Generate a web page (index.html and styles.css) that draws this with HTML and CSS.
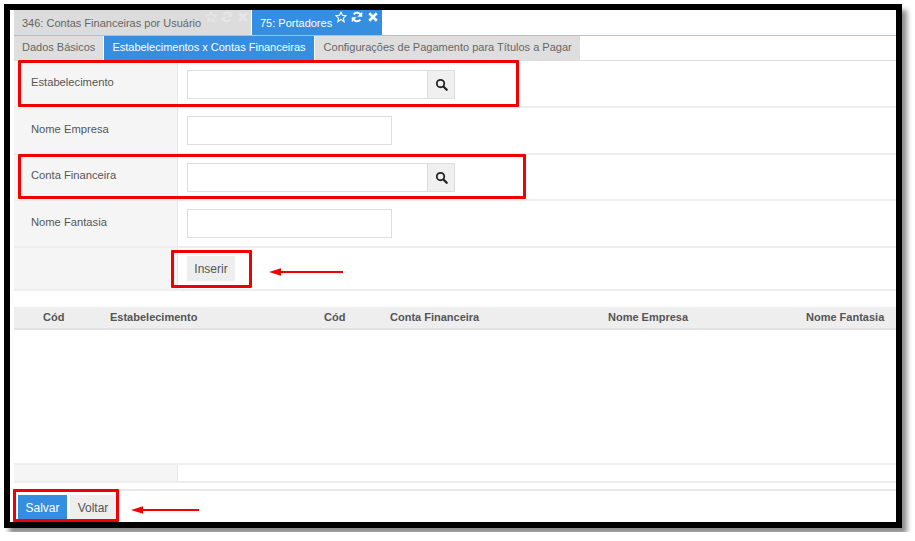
FILE: index.html
```html
<!DOCTYPE html>
<html lang="pt">
<head>
<meta charset="utf-8">
<title>Portadores</title>
<link rel="stylesheet" href="styles.css">
</head>
<body>
<div class="frame">
  <div class="page">
    <div class="window-tabs">
      <div class="wtab">
        <span class="wtab-title">346: Contas Financeiras por Usuário</span>
        <span class="wtab-icons">
          <svg class="ico" viewBox="0 0 16 16"><path d="M8 1.6l2 4.2 4.6.6-3.4 3.2.9 4.6L8 11.4l-4.1 2.8.9-4.6L1.4 6.4 6 5.8z" fill="none" stroke="currentColor" stroke-width="1.5"/></svg>
          <svg class="ico" viewBox="0 0 16 16"><path d="M13.4 6.4A5.6 5.6 0 0 0 3.6 4.4M2.6 9.6a5.6 5.6 0 0 0 9.8 2" fill="none" stroke="currentColor" stroke-width="2.6"/><path d="M15 1v6.6H8.4zM1 15V8.4h6.6z" fill="currentColor"/></svg>
          <svg class="ico" viewBox="0 0 16 16"><path d="M3 3l10 10M13 3L3 13" fill="none" stroke="currentColor" stroke-width="3.4"/></svg>
        </span>
      </div>
      <div class="wtab wtab-active">
        <span class="wtab-title">75: Portadores</span>
        <span class="wtab-icons">
          <svg class="ico" viewBox="0 0 16 16"><path d="M8 1.6l2 4.2 4.6.6-3.4 3.2.9 4.6L8 11.4l-4.1 2.8.9-4.6L1.4 6.4 6 5.8z" fill="none" stroke="currentColor" stroke-width="1.5"/></svg>
          <svg class="ico" viewBox="0 0 16 16"><path d="M13.4 6.4A5.6 5.6 0 0 0 3.6 4.4M2.6 9.6a5.6 5.6 0 0 0 9.8 2" fill="none" stroke="currentColor" stroke-width="2.6"/><path d="M15 1v6.6H8.4zM1 15V8.4h6.6z" fill="currentColor"/></svg>
          <svg class="ico" viewBox="0 0 16 16"><path d="M3 3l10 10M13 3L3 13" fill="none" stroke="currentColor" stroke-width="3.4"/></svg>
        </span>
      </div>
    </div>
    <div class="sub-tabs">
      <div class="stab">Dados Básicos</div>
      <div class="stab stab-active">Estabelecimentos x Contas Financeiras</div>
      <div class="stab stab-last">Configurações de Pagamento para Títulos a Pagar</div>
    </div>
    <div class="form">
      <div class="row">
        <div class="label">Estabelecimento</div>
        <div class="field">
          <div class="lookup"><div class="input input-long"></div><div class="search"><svg class="search-ico" viewBox="0 0 16 16"><circle cx="6.8" cy="6.8" r="4.6" fill="none" stroke="currentColor" stroke-width="2.2"/><path d="M10.4 10.4l4 4" stroke="currentColor" stroke-width="2.8" stroke-linecap="round"/></svg></div></div>
        </div>
      </div>
      <div class="row">
        <div class="label">Nome Empresa</div>
        <div class="field"><div class="input input-short"></div></div>
      </div>
      <div class="row">
        <div class="label label-up">Conta Financeira</div>
        <div class="field">
          <div class="lookup"><div class="input input-long"></div><div class="search"><svg class="search-ico" viewBox="0 0 16 16"><circle cx="6.8" cy="6.8" r="4.6" fill="none" stroke="currentColor" stroke-width="2.2"/><path d="M10.4 10.4l4 4" stroke="currentColor" stroke-width="2.8" stroke-linecap="round"/></svg></div></div>
        </div>
      </div>
      <div class="row">
        <div class="label">Nome Fantasia</div>
        <div class="field"><div class="input input-short"></div></div>
      </div>
      <div class="row row-action">
        <div class="label"></div>
        <div class="field"><div class="btn btn-insert">Inserir</div></div>
      </div>
    </div>
    <div class="grid-head">
      <span class="th th-cod1">Cód</span>
      <span class="th th-est">Estabelecimento</span>
      <span class="th th-cod2">Cód</span>
      <span class="th th-conta">Conta Financeira</span>
      <span class="th th-emp">Nome Empresa</span>
      <span class="th th-fan">Nome Fantasia</span>
    </div>
    <div class="grid-body"></div>
    <div class="grid-foot"><div class="foot-cell"></div></div>
    <div class="actions">
      <div class="btn btn-save">Salvar</div>
      <div class="btn btn-back">Voltar</div>
    </div>
  </div>
  <div class="mark mark-1"></div>
  <div class="mark mark-2"></div>
  <div class="mark mark-3"></div>
  <div class="mark mark-4"></div>
  <svg class="arrow arrow-1" viewBox="0 0 74 8"><path d="M0 4l12-3.8v2.8L74 3v2L12 5v2.8z" fill="#f00000"/></svg>
  <svg class="arrow arrow-2" viewBox="0 0 68 8"><path d="M0 4l12-3.8v2.8L68 3v2L12 5v2.8z" fill="#f00000"/></svg>
</div>
</body>
</html>
```
FILE: styles.css
```css
* { box-sizing: border-box; }
html, body { margin: 0; padding: 0; background: #fff; }
body { padding: 4px; font-family: "Liberation Sans", Arial, sans-serif; font-size: 11px; color: #555; }
.frame {
  position: relative;
  width: 898px;
  height: 524px;
  border: 6px solid #000;
  box-shadow: 5px 6px 5px rgba(0, 0, 0, 0.45);
  background: #fff;
  overflow: visible;
}
.page { height: 512px; padding-left: 4px; overflow: hidden; }

.window-tabs { display: flex; height: 26px; border-bottom: 1px solid #9cc4ee; gap: 1px; }
.wtab { display: flex; background: #dcdcdc; color: #666; height: 25px; position: relative; }
.wtab:first-child { width: 237px; }
.wtab-active { width: 130px; background: #358ee0; color: #fff; }
.wtab-title { padding: 6px 0 0 8px; line-height: 15px; white-space: nowrap; }
.wtab-icons { display: flex; gap: 4px; margin: 1px 0 0 3px; height: 12px; }
.wtab:first-child .wtab-icons { color: #e6e6e6; margin-left: 4px; }
.ico { width: 12px; height: 12px; display: block; }

.sub-tabs { display: flex; height: 25px; border-bottom: 1px solid #ddd; gap: 1px; }
.stab { height: 24px; line-height: 23px; background: #dedede; color: #666; padding: 0 8px; white-space: nowrap; }
.stab-active { background: #358ee0; color: #fff; }
.stab-last { padding-left: 9px; }

.row { display: flex; height: 46.75px; border-bottom: 2px solid #eee; }
.row-action { height: 43px; }
.label { width: 164px; background: #f5f5f5; border-right: 1px solid #e8e8e8; padding: 14px 0 0 17px; line-height: 14px; font-size: 11.2px; }
.label-up { padding-top: 13px; }
.field { padding: 9px 0 0 9px; }
.row + .row .field { padding-top: 8px; }
.lookup { display: flex; }
.input { height: 29px; background: #fff; border: 1px solid #ddd; }
.input-long { width: 241px; }
.input-short { width: 205px; }
.search { width: 27px; height: 29px; background: #f0f0f0; border: 1px solid #ddd; border-left: 0; display: flex; align-items: center; justify-content: center; color: #222; }
.search-ico { width: 13px; height: 13px; }

.btn { display: flex; align-items: center; justify-content: center; background: #eee; color: #555; font-size: 12px; }
.btn-insert { width: 48px; height: 25px; }

.grid-head { position: relative; height: 23px; margin-top: 16px; background: #eee; border-bottom: 2px solid #e2e2e2; }
.th { position: absolute; top: 3px; line-height: 14px; font-weight: 700; color: #555; white-space: nowrap; }
.th-cod1 { left: 29px; }
.th-est { left: 96px; }
.th-cod2 { left: 310px; }
.th-conta { left: 376px; }
.th-emp { left: 594px; }
.th-fan { left: 792px; }
.grid-body { height: 133px; }
.grid-foot { height: 20px; border-top: 2px solid #eee; border-bottom: 2px solid #eee; }
.foot-cell { width: 164px; height: 16px; background: #f5f5f5; border-right: 1px solid #e8e8e8; }
.actions { display: flex; gap: 3px; margin-top: 6px; padding: 4px 0 0 4px; border-top: 2px solid #e8e8e8; }
.actions .btn { height: 26px; }
.btn-save { width: 49px; background: #358ee0; color: #fff; }
.btn-back { width: 46px; }

.mark { position: absolute; border: 3px solid #f00000; border-radius: 1px; }
.mark-1 { left: 8px; top: 50px; width: 501px; height: 47px; }
.mark-2 { left: 8px; top: 144px; width: 508px; height: 45px; }
.mark-3 { left: 161px; top: 240px; width: 81px; height: 38px; }
.mark-4 { left: 3px; top: 479px; width: 106px; height: 33px; }
.arrow { position: absolute; height: 8px; }
.arrow-1 { left: 259px; top: 258px; width: 74px; }
.arrow-2 { left: 121px; top: 496px; width: 68px; }
```
